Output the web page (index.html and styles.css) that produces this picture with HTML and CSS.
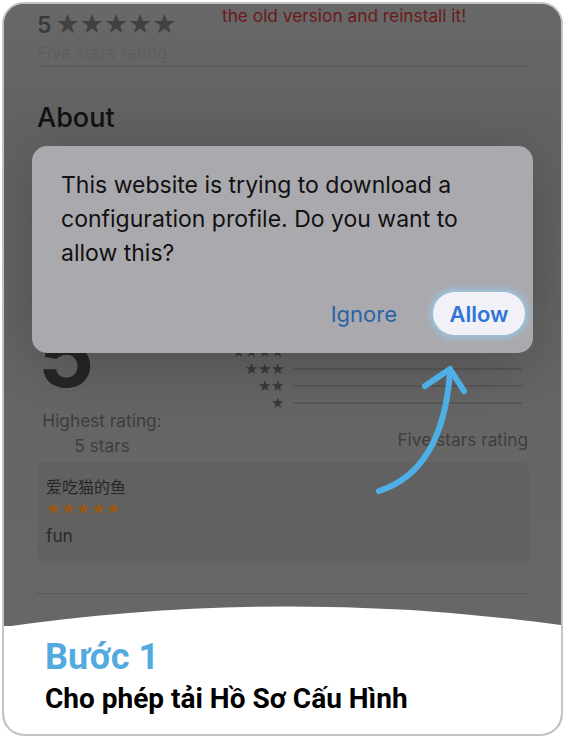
FILE: index.html
```html
<!DOCTYPE html>
<html lang="vi">
<head>
<meta charset="utf-8">
<title>Bước 1</title>
<link rel="stylesheet" href="styles.css">
</head>
<body>
<div class="card">
  <div class="screen">
    <div class="page">
      <div class="top-row">
        <div class="score-line"><span class="score-num">5</span><span class="score-stars">★★★★★</span></div>
        <div class="warn">the old version and reinstall it!</div>
      </div>
      <div class="muted">Five stars rating</div>
      <div class="rule"></div>
      <h2 class="about">About</h2>
      <div class="ratings">
        <div class="rating-left">
          <div class="big-score">5</div>
          <div class="hi">Highest rating:</div>
          <div class="hi hi2">5 stars</div>
        </div>
        <div class="rating-right">
          <div class="bar-row"><span class="bar-stars">★★★★★</span><span class="bar"></span></div>
          <div class="bar-row"><span class="bar-stars">★★★★</span><span class="bar"></span></div>
          <div class="bar-row"><span class="bar-stars">★★★</span><span class="bar"></span></div>
          <div class="bar-row"><span class="bar-stars">★★</span><span class="bar"></span></div>
          <div class="bar-row"><span class="bar-stars">★</span><span class="bar"></span></div>
          <div class="five-label">Five stars rating</div>
        </div>
      </div>
      <div class="review">
        <div class="review-name">爱吃猫的鱼</div>
        <div class="review-stars">★★★★★</div>
        <div class="review-text">fun</div>
      </div>
      <div class="rule rule-bottom"></div>
    </div>

    <div class="dialog">
      <p class="dialog-text">This website is trying to download a<br>configuration profile. Do you want to<br>allow this?</p>
      <div class="dialog-actions">
        <span class="btn-ignore">Ignore</span>
        <span class="btn-allow">Allow</span>
      </div>
    </div>

    <svg class="arrow" viewBox="4 4 557 622" width="557" height="622" aria-hidden="true">
      <path d="M379 491 C420 478 445 440 450 372" fill="none" stroke="#4eaee6" stroke-width="6" stroke-linecap="round"/>
      <path d="M425 386 L450 369 L464 391" fill="none" stroke="#4eaee6" stroke-width="6" stroke-linecap="round" stroke-linejoin="round"/>
    </svg>
  </div>

  <div class="caption">
    <svg class="wave" viewBox="0 0 557 22" width="557" height="22" preserveAspectRatio="none" aria-hidden="true">
      <path d="M0 22 Q280 -18 557 20 L557 22 Z" fill="#ffffff"/>
    </svg>
    <div class="step">Bước 1</div>
    <div class="step-title">Cho phép tải Hồ Sơ Cấu Hình</div>
  </div>
</div>
</body>
</html>
```

FILE: styles.css
```css
* { box-sizing: border-box; }

html, body {
  margin: 0;
  padding: 0;
  background: #ffffff;
}

.card {
  margin: 2px 0 0 2px;
  width: 561px;
  height: 734px;
  border: 2px solid #c4c4c4;
  border-radius: 22px;
  overflow: hidden;
  background: #666666;
  display: flex;
  flex-direction: column;
}

.screen {
  position: relative;
  height: 622px;
  flex: none;
  overflow: hidden;
  background: linear-gradient(#686868, #626262 20%, #656565 60%, #676767);
}

.page {
  padding: 5px 31px 0 33px;
  font-family: "Inter", "Noto Sans CJK SC", sans-serif;
  font-size: 17.3px;
}

.top-row {
  display: flex;
  align-items: flex-start;
}

.score-line {
  width: 185px;
  flex: none;
  height: 30px;
  line-height: 30px;
  white-space: nowrap;
}

.score-num {
  font-size: 23px;
  font-weight: 600;
  color: #3a3a3a;
  margin-right: 4px;
}

.score-stars {
  font-family: "DejaVu Sans", sans-serif;
  font-size: 27px;
  letter-spacing: 0px;
  color: #424242;
}

.warn {
  margin-top: -3.3px;
  line-height: 20px;
  color: #6a1a1a;
  white-space: nowrap;
}

.muted {
  margin-top: 4px;
  line-height: 20px;
  color: #5e5e5e;
}

.rule {
  margin-top: 3px;
  height: 1px;
  background: #595959;
}

.about {
  margin: 33.5px 0 0;
  font-size: 27px;
  line-height: 34px;
  font-weight: 500;
  color: #111111;
}

.ratings {
  margin-top: 175.5px;
  display: grid;
  grid-template-columns: 130px 1fr;
  height: 147px;
}

.rating-left {
  text-align: center;
}

.big-score {
  text-align: left;
  padding-left: 1px;
  font-size: 88px;
  line-height: 91px;
  font-weight: 700;
  color: #262626;
}

.hi {
  margin-top: 10px;
  line-height: 20px;
  color: #3e3e3e;
}

.hi2 {
  margin-top: 5.4px;
}

.rating-right {
  padding-top: 16.5px;
  padding-right: 2px;
}

.bar-row {
  display: flex;
  align-items: center;
  height: 17px;
}

.bar-stars {
  width: 117px;
  flex: none;
  text-align: right;
  font-family: "DejaVu Sans", sans-serif;
  font-size: 15px;
  line-height: 17px;
  letter-spacing: -0.4px;
  color: #3a3a3a;
}

.bar {
  flex: 1;
  margin: 0 6px 0 9px;
  height: 2px;
  border-radius: 1px;
  background: #575757;
}

.five-label {
  margin-top: 18.9px;
  text-align: right;
  line-height: 20px;
  color: #3e3e3e;
}

.review {
  margin-top: 4.7px;
  margin-right: 1px;
  height: 101px;
  padding: 14px 9px 0;
  border-radius: 7px;
  background: #616161;
}

.review-name {
  font-size: 16px;
  line-height: 22px;
  color: #262626;
}

.review-stars {
  margin-top: 2px;
  font-family: "DejaVu Sans", sans-serif;
  font-size: 16.5px;
  line-height: 18px;
  letter-spacing: 0.2px;
  color: #9a5a14;
}

.review-text {
  margin-top: 8px;
  line-height: 20px;
  color: #2a2a2a;
}

.rule-bottom {
  margin-top: 30px;
}

.dialog {
  position: absolute;
  left: 28px;
  top: 142px;
  width: 501px;
  height: 207px;
  padding: 22px 8px 18px 29px;
  border-radius: 15px;
  background: #aaa9ae;
  box-shadow: 0 12px 60px rgba(0, 0, 0, 0.22);
  display: flex;
  flex-direction: column;
  font-family: "Inter", sans-serif;
}

.dialog-text {
  margin: 0;
  font-size: 23px;
  line-height: 34px;
  color: #111111;
}

.dialog-actions {
  margin-top: auto;
  display: flex;
  justify-content: flex-end;
  align-items: center;
}

.btn-ignore {
  font-size: 22px;
  line-height: 28px;
  color: #2c63a6;
  margin-right: 36px;
}

.btn-allow {
  width: 92px;
  height: 43px;
  border-radius: 22px;
  background: #f1f1f7;
  box-shadow: 0 0 6px 3px rgba(150, 205, 240, 0.75);
  display: flex;
  align-items: center;
  justify-content: center;
  font-size: 22px;
  font-weight: 600;
  color: #2f74d6;
}

.arrow {
  position: absolute;
  left: 0;
  top: 0;
}

.caption {
  position: relative;
  flex: 1;
  background: #ffffff;
  padding: 10.7px 20px 0 41px;
  font-family: "Roboto", sans-serif;
}

.wave {
  position: absolute;
  left: 0;
  top: -21px;
  display: block;
}

.step {
  font-size: 36px;
  line-height: 40px;
  font-weight: 700;
  color: #52aadf;
}

.step-title {
  margin-top: 6.5px;
  font-size: 28px;
  line-height: 32px;
  font-weight: 700;
  color: #000000;
  white-space: nowrap;
}
```
